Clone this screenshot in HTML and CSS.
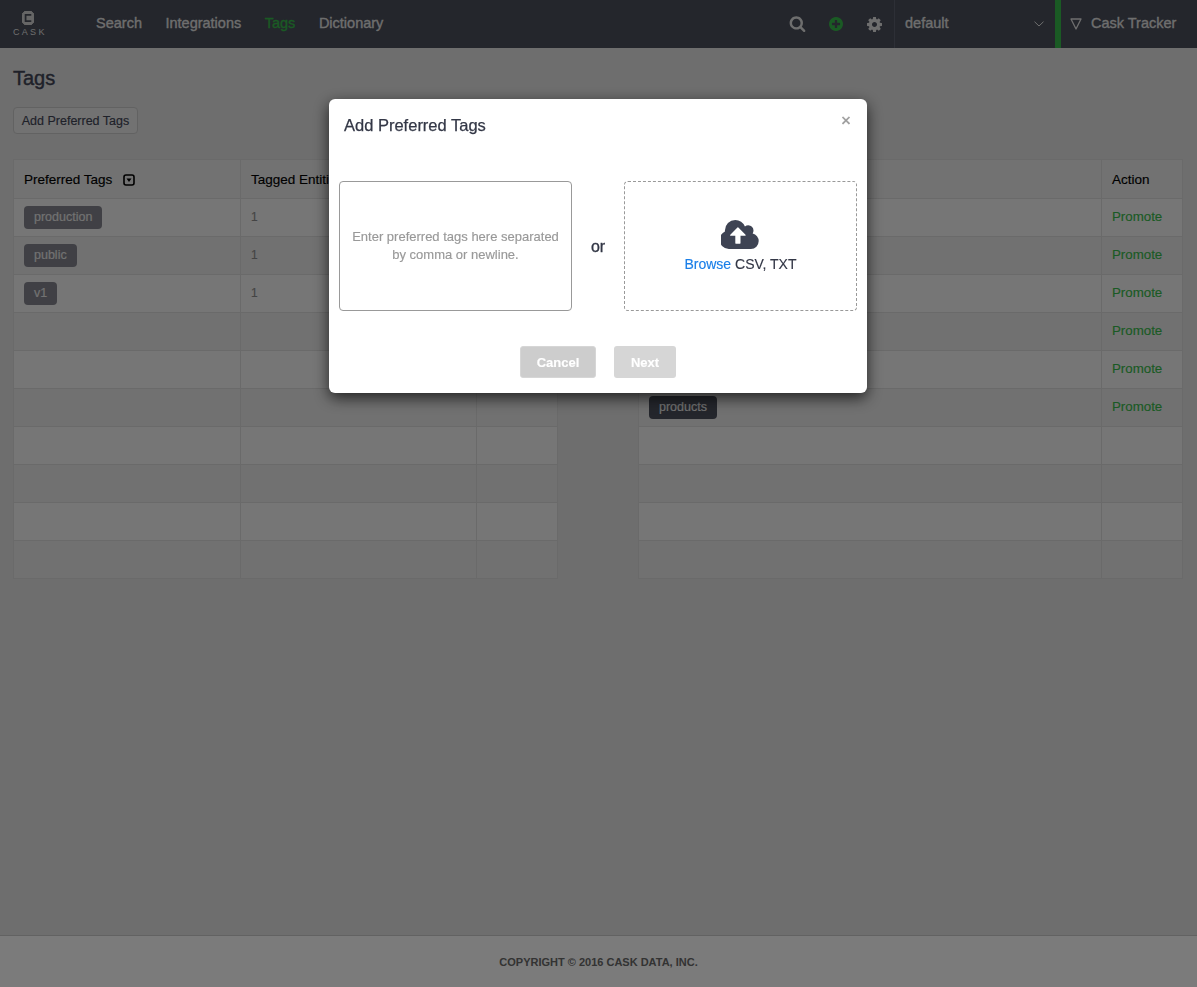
FILE: index.html
```html
<!DOCTYPE html>
<html>
  <head>
    <meta name="viewport" content="width=device-width, initial-scale=1.0" />
    <title>Tags</title>
    <link rel="stylesheet" href="styles.css">
  </head>

  <body>
    <nav class="topbar">
      <div class="brand">
        <svg class="brand-mark" viewBox="0.8 0.8 12.4 14.4">
          <path d="M4 .8h6L13.2 4v8L10 15.200H4L.8 12V4z" fill="#ccc" stroke="#ccc" stroke-linejoin="round"/>
          <path d="M9.500 5.800V4.700H4.500v6.600h5v-1.100" fill="none" stroke="#484c58" stroke-width="1.800"/>
        </svg>
        <span class="brand-name">CASK</span>
      </div>
      <a class="nav-link">Search</a>
      <a class="nav-link">Integrations</a>
      <a class="nav-link active">Tags</a>
      <a class="nav-link">Dictionary</a>

      <div class="nav-icons">
        <svg class="icon-search" viewBox="0 0 1792 1792"><path d="M1216 832q0-185-131.500-316.500t-316.500-131.500-316.500 131.500-131.500 316.500 131.500 316.500 316.500 131.500 316.500-131.500 131.500-316.500zm512 832q0 52-38 90t-90 38q-54 0-90-38l-343-342q-179 124-399 124-143 0-273.500-55.500t-225-150-150-225-55.500-273.500 55.500-273.500 150-225 225-150 273.500-55.500 273.500 55.500 225 150 150 225 55.500 273.500q0 220-124 399l343 343q37 37 37 90z"/></svg>
        <svg class="icon-plus" viewBox="128 128 1536 1536"><path d="M1344 960v-128q0-26-19-45t-45-19h-256v-256q0-26-19-45t-45-19h-128q-26 0-45 19t-19 45v256h-256q-26 0-45 19t-19 45v128q0 26 19 45t45 19h256v256q0 26 19 45t45 19h128q26 0 45-19t19-45v-256h256q26 0 45-19t19-45zm320-64q0 209-103 385.500t-279.500 279.500-385.500 103-385.500-103-279.500-279.500-103-385.500 103-385.500 279.500-279.500 385.500-103 385.500 103 279.500 279.500 103 385.500z"/></svg>
        <svg class="icon-cog" viewBox="128 128 1536 1536"><path d="M1152 896q0-106-75-181t-181-75-181 75-75 181 75 181 181 75 181-75 75-181zm512-109v222q0 12-8 23t-20 13l-185 28q-19 54-39 91 35 50 107 138 10 12 10 25t-9 23q-27 37-99 108t-94 71q-12 0-26-9l-138-108q-44 23-91 38-16 136-29 186-7 28-36 28h-222q-14 0-24.500-8.500t-11.500-21.500l-28-184q-49-16-90-37l-141 107q-10 9-25 9-14 0-25-11-126-114-165-168-7-10-7-23 0-12 8-23 15-21 51-66.500t54-70.500q-27-50-41-99l-183-27q-13-2-21-12.500t-8-23.500v-222q0-12 8-23t19-13l186-28q14-46 39-92-40-57-107-138-10-12-10-24 0-10 9-23 26-36 98.500-107.500t94.500-71.500q13 0 26 10l138 107q44-23 91-38 16-136 29-186 7-28 36-28h222q14 0 24.500 8.500t11.500 21.500l28 184q49 16 90 37l142-107q9-9 24-9 13 0 25 10 129 119 165 170 7 8 7 22 0 12-8 23-15 21-51 66.500t-54 70.500q26 50 41 98l183 28q13 2 21 12.500t8 23.500z"/></svg>
      </div>

      <div class="namespace">
        <span>default</span>
        <svg class="chevron" viewBox="0 0 10 6"><path d="M.5.700 5 5 9.500.700" fill="none" stroke="#ddd" stroke-width="1"/></svg>
      </div>

      <div class="product">
        <svg class="funnel" viewBox="0 0 12 12"><path d="M1 1h10L6 11z" fill="none" stroke="#ddd" stroke-width="1.300" stroke-linejoin="round"/></svg>
        <span>Cask Tracker</span>
      </div>
    </nav>

    <main class="content">
      <h1 class="page-title">Tags</h1>
      <button class="add-btn">Add Preferred Tags</button>

      <div class="tables">
        <table class="tag-table left">
          <thead>
            <tr>
              <th class="col-tag">
                Preferred Tags
                <svg class="sort-icon" viewBox="0 0 12 12"><rect x="1" y="1" width="10" height="10" rx="2" fill="none" stroke="#000" stroke-width="1.600"/><path d="M3.500 4.500h5L6 8z"/></svg>
              </th>
              <th class="col-count">Tagged Entities</th>
              <th></th>
            </tr>
          </thead>
          <tbody>
            <tr><td><span class="tag">production</span></td><td class="count">1</td><td></td></tr>
            <tr><td><span class="tag">public</span></td><td class="count">1</td><td></td></tr>
            <tr><td><span class="tag">v1</span></td><td class="count">1</td><td></td></tr>
            <tr><td></td><td></td><td></td></tr>
            <tr><td></td><td></td><td></td></tr>
            <tr><td></td><td></td><td></td></tr>
            <tr><td></td><td></td><td></td></tr>
            <tr><td></td><td></td><td></td></tr>
            <tr><td></td><td></td><td></td></tr>
            <tr><td></td><td></td><td></td></tr>
          </tbody>
        </table>

        <table class="tag-table right">
          <thead>
            <tr><th></th><th class="col-action">Action</th></tr>
          </thead>
          <tbody>
            <tr><td></td><td class="promote">Promote</td></tr>
            <tr><td></td><td class="promote">Promote</td></tr>
            <tr><td></td><td class="promote">Promote</td></tr>
            <tr><td></td><td class="promote">Promote</td></tr>
            <tr><td></td><td class="promote">Promote</td></tr>
            <tr><td><span class="tag dark">products</span></td><td class="promote">Promote</td></tr>
            <tr><td></td><td></td></tr>
            <tr><td></td><td></td></tr>
            <tr><td></td><td></td></tr>
            <tr><td></td><td></td></tr>
          </tbody>
        </table>
      </div>
    </main>

    <footer class="footer">COPYRIGHT © 2016 CASK DATA, INC.</footer>

    <div class="backdrop">
      <div class="modal">
        <div class="modal-head">
          <h4 class="modal-title">Add Preferred Tags</h4>
          <span class="modal-close">×</span>
        </div>
        <div class="modal-body">
          <div class="tag-input">Enter preferred tags here separated by comma or newline.</div>
          <span class="or">or</span>
          <div class="dropzone">
            <svg class="cloud" viewBox="0 128 1920 1408" preserveAspectRatio="none"><path d="M1216 864q0-14-9-23l-352-352q-9-9-23-9t-23 9l-351 351q-10 12-10 24 0 14 9 23t23 9h224v352q0 13 9.500 22.500t22.500 9.500h192q13 0 22.500-9.500t9.500-22.500v-352h224q13 0 22.500-9.500t9.500-22.500zm640 288q0 159-112.500 271.500t-271.500 112.500h-1088q-185 0-316.500-131.500t-131.500-316.500q0-130 70-240t188-165q-2-30-2-43 0-212 150-362t362-150q156 0 285.500 87t188.500 231q71-62 166-62 106 0 181 75t75 181q0 76-41 138 130 31 213.500 135.500t83.500 238.500z"/></svg>
            <div class="browse"><a>Browse</a> CSV, TXT</div>
          </div>
        </div>
        <div class="modal-foot">
          <button class="modal-btn cancel">Cancel</button>
          <button class="modal-btn next">Next</button>
        </div>
      </div>
    </div>
  </body>
</html>
```

FILE: styles.css
```css
* {
  box-sizing: border-box;
}

html,
body {
  height: 100%;
}

body {
  margin: 0;
  display: flex;
  flex-direction: column;
  min-height: 987px;
  background-color: #dcdcdc;
  color: #333;
  font-family: "Liberation Sans", Arial, sans-serif;
  font-size: 13px;
  -webkit-text-stroke: 0.15px;
}

/*top navigation*/
.topbar {
  display: flex;
  align-items: center;
  height: 48px;
  flex-shrink: 0;
  background-color: #484c58;
  color: #ddd;
}

.brand {
  width: 96px;
  padding: 0 0 1px 13px;
  display: flex;
  flex-direction: column;
  align-items: flex-start;
}

.brand-mark {
  width: 12px;
  height: 14px;
  margin-left: 9px;
  margin-bottom: 3px;
}

.brand-name {
  font-size: 9px;
  letter-spacing: 2.3px;
  line-height: 8px;
  -webkit-text-stroke: 0;
}

.nav-link {
  font-size: 14.5px;
  margin: 0 23.5px 2px 0;
  -webkit-text-stroke: 0.35px;
}

.nav-link.active {
  color: #35b548;
}

.nav-icons {
  margin-left: auto;
  display: flex;
  align-items: center;
  height: 48px;
  fill: #ddd;
}

.icon-search {
  width: 17px;
  height: 17px;
  margin: 0 23px 1px 0;
}

.icon-plus {
  width: 14px;
  height: 14px;
  margin-right: 24px;
  fill: #35b548;
}

.icon-cog {
  width: 15px;
  height: 15px;
  margin-right: 12px;
}

.namespace {
  width: 161px;
  height: 48px;
  padding: 0 11px 2px 10px;
  display: flex;
  align-items: center;
  justify-content: space-between;
  border-left: 1px solid #5a5e6c;
  font-size: 14.5px;
  -webkit-text-stroke: 0.35px;
}

.chevron {
  width: 10px;
  height: 6px;
  margin-top: 2px;
}

.product {
  width: 142px;
  height: 48px;
  display: flex;
  align-items: center;
  gap: 9px;
  padding: 0 0 2px 9px;
  border-left: 6px solid #35b548;
  font-size: 14.5px;
  -webkit-text-stroke: 0.35px;
}

.funnel {
  width: 12px;
  height: 12px;
  margin-top: 1px;
}

/*page content*/
.content {
  flex: 1;
  padding: 0 14px 0 13px;
}

.page-title {
  margin: 19px 0 17px;
  font-size: 20px;
  line-height: 23px;
  font-weight: normal;
  color: #3e4353;
  -webkit-text-stroke: 0.4px;
}

.add-btn {
  display: block;
  width: 125px;
  height: 27px;
  padding: 0;
  background-color: #e4e4e4;
  border: 1px solid #c4c4c4;
  border-radius: 4px;
  color: #3e4353;
  font-family: inherit;
  font-size: 12.5px;
}

.tables {
  display: flex;
  justify-content: space-between;
  margin-top: 25px;
}

.tag-table {
  border-collapse: collapse;
  table-layout: fixed;
  width: 545px;
}

.tag-table th,
.tag-table td {
  height: 38px;
  padding: 0 10px;
  border: 1px solid #d4d4d4;
  text-align: left;
  vertical-align: middle;
  overflow: hidden;
  white-space: nowrap;
}

.tag-table th {
  height: 39px;
  font-size: 13.5px;
  font-weight: normal;
  color: #000;
  background-color: #e4e4e4;
}

.tag-table tbody tr:nth-child(odd) td {
  background-color: #ededed;
}

.tag-table tbody tr:nth-child(even) td {
  background-color: #e3e3e3;
}

.col-tag {
  width: 227px;
}

.col-count {
  width: 236px;
}

.col-action {
  width: 81px;
}

.sort-icon {
  width: 12px;
  height: 12px;
  margin-left: 7px;
  vertical-align: -2px;
}

.tag {
  display: inline-block;
  height: 23px;
  line-height: 22px;
  padding: 0 10px;
  border-radius: 4px;
  background-color: #80818a;
  color: #e4e4e4;
  font-size: 12.500px;
}

.tag.dark {
  background-color: #484c58;
}

.tag-table td.count {
  color: #888;
  font-size: 12px;
  padding-bottom: 2px;
}

.tag-table td.promote {
  color: #35b548;
  font-size: 13.3px;
  padding-bottom: 2px;
}

.footer {
  height: 52px;
  flex-shrink: 0;
  display: flex;
  align-items: center;
  justify-content: center;
  background-color: #f6f6f6;
  border-top: 1px solid #c4c4c4;
  color: #666;
  font-size: 11px;
  font-weight: bold;
  -webkit-text-stroke: 0;
}

/*modal and the dark layer behind it*/
.backdrop {
  position: fixed;
  top: 0;
  right: 0;
  bottom: 0;
  left: 0;
  background-color: rgba(0, 0, 0, 0.5);
}

.modal {
  position: absolute;
  top: 99px;
  left: 329px;
  width: 538px;
  height: 294px;
  background-color: #fff;
  border-radius: 6px;
  box-shadow: 0 5px 15px rgba(0, 0, 0, 0.7);
}

.modal-head {
  display: flex;
  justify-content: space-between;
  height: 82px;
  padding: 17px 16px 0 15px;
}

.modal-title {
  margin: 0;
  font-size: 16.500px;
  line-height: 19px;
  font-weight: normal;
  color: #333746;
  -webkit-text-stroke: 0.25px;
}

.modal-close {
  font-size: 17px;
  line-height: 9px;
  color: #999;
  -webkit-text-stroke: 0.4px;
}

.modal-body {
  display: flex;
  align-items: center;
  justify-content: space-between;
  padding: 0 10px;
}

.tag-input,
.dropzone {
  width: 233px;
  height: 130px;
  border-radius: 4px;
}

.tag-input {
  display: flex;
  align-items: center;
  padding: 0 10px;
  border: 1px solid #999;
  text-align: center;
  line-height: 18px;
  color: #999;
}

.or {
  margin-top: 2px;
  font-size: 16px;
  color: #333746;
  -webkit-text-stroke: 0.3px;
}

.dropzone {
  display: flex;
  flex-direction: column;
  align-items: center;
  justify-content: center;
  border: 1px dashed #999;
}

.cloud {
  width: 39px;
  height: 29px;
  fill: #3e4353;
  margin-bottom: 6px;
}

.browse {
  font-size: 14px;
  line-height: 18px;
  color: #333746;
}

.browse a {
  color: #1a7fe8;
}

.modal-foot {
  display: flex;
  justify-content: center;
  gap: 18px;
  padding-top: 35px;
}

.modal-btn {
  height: 32px;
  border: 0;
  border-radius: 3px;
  color: #fff;
  font-family: inherit;
  font-size: 13px;
  font-weight: bold;
}

.modal-btn.cancel {
  width: 76px;
  background-color: #cdcdcd;
  border: 1px solid #d6d6d6;
}

.modal-btn.next {
  width: 62px;
  background-color: #d6d6d6;
}
```
